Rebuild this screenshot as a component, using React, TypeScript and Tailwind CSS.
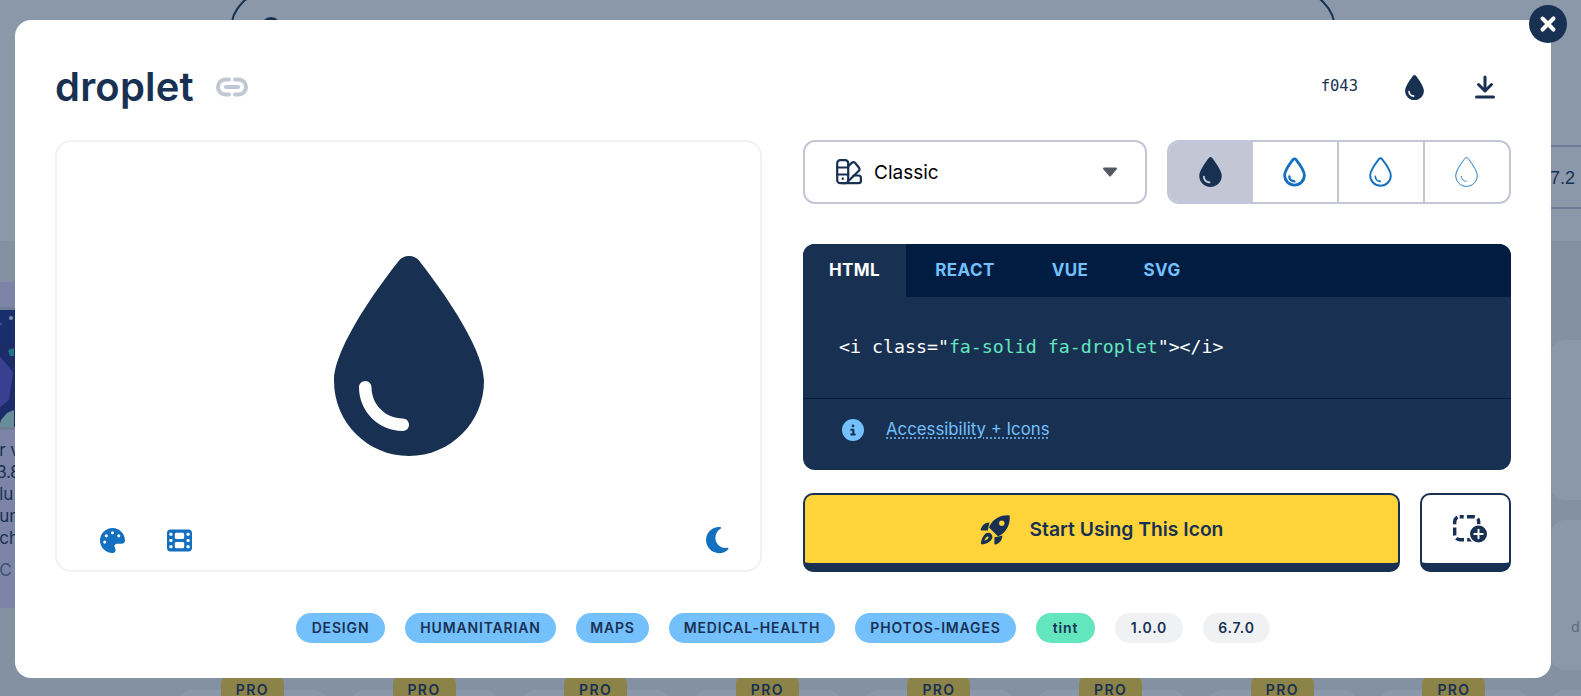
import {
  FaCircleInfo,
  FaDroplet,
  FaFilm,
  FaPalette,
  FaXmark,
} from "react-icons/fa6";

const FONT = "font-['Inter','Lato',sans-serif]";

const tags = [
  { label: "DESIGN", className: "w-[89px] bg-[#74c0fc]" },
  { label: "HUMANITARIAN", className: "w-[151px] bg-[#74c0fc]" },
  { label: "MAPS", className: "w-[73px] bg-[#74c0fc]" },
  { label: "MEDICAL-HEALTH", className: "w-[166px] bg-[#74c0fc]" },
  { label: "PHOTOS-IMAGES", className: "w-[161px] bg-[#74c0fc]" },
  { label: "tint", className: "w-[59px] bg-[#63e6be]" },
  { label: "1.0.0", className: "w-[68px] bg-[#f0f1f3]" },
  { label: "6.7.0", className: "w-[67px] bg-[#f0f1f3]" },
];

const DROP =
  "M192 512C86 512 0 426 0 320C0 228.8 130.2 57.7 166.6 11.7C172.6 4.2 181.5 0 191.1 0l1.8 0c9.6 0 18.5 4.2 24.5 11.7C253.8 57.7 384 228.8 384 320c0 106-86 192-192 192z";

function DropletOutline({ weight }: { weight: number }) {
  const s = (384 - weight) / 384;
  return (
    <svg viewBox="0 0 384 512" className="mr-[2px] h-[30px] w-[23px]" fill="none" stroke="#146fbe">
      <g transform={`translate(192 256) scale(${s}) translate(-192 -256)`}>
        <path d={DROP} strokeWidth={weight / s} />
      </g>
      <path
        d="M104 330c0 48 38 86 86 86"
        strokeWidth={weight * 0.85}
        strokeLinecap="round"
      />
    </svg>
  );
}

function LinkSimple() {
  return (
    <svg viewBox="0 0 34 20" className="ml-[21px] h-[20px] w-[34px]" fill="none" stroke="#c3c6d4" strokeWidth="4" strokeLinecap="round">
      <path d="M14 2.5H10.5a7.5 7.5 0 0 0 0 15H14" />
      <path d="M20 2.5h3.5a7.5 7.5 0 0 1 0 15H20" />
      <path d="M11 10h12" />
    </svg>
  );
}

function DownloadIcon() {
  return (
    <svg viewBox="0 0 20 24" className="h-[24px] w-[20px]" fill="none" stroke="#183153" strokeWidth="3" strokeLinecap="round" strokeLinejoin="round">
      <path d="M10 2v13" />
      <path d="M3.5 9.5 10 16l6.5-6.5" />
      <path d="M1.5 22h17" />
    </svg>
  );
}

function Swatchbook() {
  return (
    <svg viewBox="0 0 26 26" className="h-[26px] w-[26px]" fill="none" stroke="#183153" strokeWidth="2.2" strokeLinecap="round" strokeLinejoin="round">
      <rect x="1.2" y="1.2" width="11" height="23" rx="3" />
      <path d="M1.2 8.5h11M1.2 15.5h11" />
      <circle cx="6.7" cy="19.8" r="1.2" fill="#183153" stroke="none" />
      <path d="M12.5 7 16 3.6q1.6-1.2 3 .2l4 5q1.2 1.6-.2 3L13 21.5" />
      <path d="M17.5 16.5h5q2.4 0 2.4 2.4v3q0 2.2-2.4 2.2H7" />
    </svg>
  );
}

function RocketLaunch() {
  return (
    <svg viewBox="0 0 30 30" className="h-[30px] w-[30px]" fill="#183153">
      <path
        fillRule="evenodd"
        d="M29.6.4C30.4 8 27.6 15 21.5 19.4c-1 .7-2.2 1.4-3.6 1.9L9 12.4c.5-1.4 1.1-2.6 1.9-3.6C15.2 2.6 22-.4 29.6.4ZM21.8 5.6a2.7 2.7 0 1 0 0 5.4 2.7 2.7 0 0 0 0-5.4Z"
      />
      <path d="M9.6 7.6C6.8 7.8 4 8.4 2.2 11.2L.7 14c-.3.8.2 1.5 1 1.5h6.2c.3-2.8.9-5.4 1.7-7.9Z" />
      <path d="M22.4 20.6c-.2 2.8-.8 5.5-3.6 7.4l-2.9 1.5c-.8.3-1.5-.2-1.5-1v-6.2c2.8-.4 5.5-.9 8-1.7Z" />
      <path
        fillRule="evenodd"
        d="M5.4 18.8c2-1.6 4.6-1.2 6 .4 1.5 1.6 1.4 4-.2 5.8-1.6 2-4.4 3.6-8.6 4.4-1 .2-1.8-.6-1.7-1.6.7-3.8 2.2-6.9 4.5-9Zm1.6 3c-1.1.6-2 2-2.6 3.8 1.8-.6 3.2-1.4 3.9-2.4.7-1.2-.2-2-1.3-1.4Z"
      />
    </svg>
  );
}

function DashedPlus() {
  return (
    <svg viewBox="0 0 35 28" className="ml-[10px] h-[28px] w-[35px]">
      <rect x="1.7" y="1.7" width="24" height="23" rx="5" fill="none" stroke="#183153" strokeWidth="3.4" strokeDasharray="8 3.2" strokeDashoffset="4" />
      <circle cx="25.5" cy="19" r="10" fill="#fff" />
      <circle cx="25.5" cy="19" r="8.5" fill="#183153" />
      <path d="M25.5 14.8v8.4M21.3 19h8.4" stroke="#fff" strokeWidth="2" strokeLinecap="round" />
    </svg>
  );
}

function Moon() {
  return (
    <svg viewBox="0 0 512 512" className="ml-auto h-[30px] w-[30px]" fill="currentColor">
      <path d="M223.5 32C100 32 0 132.3 0 256S100 480 223.5 480c60.6 0 115.5-24.2 155.8-63.4c5-4.9 6.3-12.5 3.1-18.7s-10.1-9.7-17-8.5c-9.8 1.7-19.8 2.6-30.1 2.6c-96.9 0-175.5-78.8-175.5-176c0-65.8 36-123.1 89.3-153.3c6.1-3.5 9.2-10.5 7.7-17.3s-7.3-11.9-14.3-12.5c-6.3-.5-12.6-.8-19-.8z" />
    </svg>
  );
}

function AdPicture() {
  return (
    <svg viewBox="0 0 60 117" className="h-[117px] w-[60px]">
      <rect width="60" height="117" fill="#20267f" />
      <rect y="0" width="60" height="34" fill="#1a2a86" />
      <circle cx="12" cy="8" r="2" fill="#e6ecff" />
      <circle cx="2" cy="14" r="0.8" fill="#aab6ff" />
      <path d="M0 45 14 62 10 90 0 98z" fill="#5a4fd0" />
      <path d="M9 40 15 38 15 46 11 46z" fill="#2bb6b8" />
      <path d="M2 110 8 103 15 100 15 117 0 117z" fill="#b8e8e0" />
    </svg>
  );
}

export default function App() {
  return (
    <div className={`relative h-[696px] overflow-hidden bg-white ${FONT} text-[#183153]`}>
      {/* page behind the modal */}
      <div className="flex h-[241px] overflow-hidden">
        <div className="relative ml-[230px] -mt-[10px] h-20 w-[1106px] rounded-[40px] border-2 border-[#183153]">
          <div className="ml-[29px] mt-[25px] h-5 w-5 rounded-full bg-[#183153]" />
        </div>
        <div className="ml-auto mt-[145px] flex h-[64px] w-[100px] items-center justify-end border-y-2 border-[#c3c6d4] pr-[6px] pt-[1px] font-['Liberation_Sans',sans-serif] text-lg">
          7.2
        </div>
      </div>
      <div className="h-[455px] bg-[#f0f1f3]">
        <div className="grid grid-cols-[repeat(10,151.67px)] grid-rows-[160px_150px_150px] gap-5 pl-[5.2px] pt-[99px]">
          <div className="row-span-3 -ml-[6px] -mt-[58px] h-[326px] w-[100px] self-start overflow-hidden bg-[#e0d8fb]">
            <div className="mt-[25px] border-y-[3px] border-[#c9c9d6]">
              <AdPicture />
            </div>
            <div className="mt-[9px] whitespace-nowrap text-[17px] leading-[22px] text-[#183153]">
              <p>r v</p>
              <p className="-ml-[3px] tracking-tight">3.8</p>
              <p>lu</p>
              <p>un</p>
              <p>ch</p>
              <p className="mt-[10px] text-[#6c7390]">C</p>
            </div>
          </div>
          {Array.from({ length: 27 }).map((_, i) => (
            <div key={i} className="relative rounded-2xl bg-white">
              {i === 17 && <p className="pl-[21px] pt-[97px] text-sm text-[#9ca1b1]">d</p>}
              {i >= 18 && (
                <span className="absolute -top-[14px] left-[44px] flex h-[28px] w-[63px] items-center justify-center rounded-lg bg-[#ffd43b] text-sm font-semibold tracking-widest">
                  PRO
                </span>
              )}
            </div>
          ))}
        </div>
      </div>

      {/* modal */}
      <div className="absolute inset-0 flex items-start bg-[#183153]/50">
        <div className="relative ml-[15px] mt-[20px] h-[658px] w-[1536px] rounded-2xl bg-white px-10 pt-10">
          <button className="absolute -right-4 -top-[15px] flex h-[38px] w-[38px] items-center justify-center rounded-full bg-[#183153] text-white">
            <FaXmark className="h-[22px] w-[22px] stroke-current stroke-[30]" />
          </button>

          <header className="mb-[26px] flex h-[54px] items-center">
            <h1 className="text-[40px] font-semibold leading-none tracking-[0.2px]">droplet</h1>
            <LinkSimple />
            <code className="ml-auto font-['DejaVu_Sans_Mono',monospace] text-[15.5px]">f043</code>
            <FaDroplet className="ml-[47px] h-[25px] w-[19px]" />
            <span className="ml-[51px] mr-[16px]">
              <DownloadIcon />
            </span>
          </header>

          <div className="flex h-[432px] gap-[41px]">
            <section className="flex w-[707px] flex-col items-center rounded-2xl border-2 border-[#f0f1f3] pt-[114px]">
              <FaDroplet className="h-[200px] w-[150px]" />
              <div className="mt-[69px] flex w-full items-center pl-[43px] pr-[24px] text-[#146fbe]">
                <FaPalette className="h-[25px] w-[25px]" />
                <FaFilm className="ml-[42px] h-[25px] w-[25px]" />
                <Moon />
              </div>
            </section>

            <section className="flex w-[708px] flex-col">
              <div className="flex h-[64px] gap-5">
                <button className="flex w-[344px] items-center rounded-xl border-2 border-[#c3c6d4] pl-[31px] pr-[27px] text-[19px] text-black">
                  <Swatchbook />
                  <span className="ml-[12px] pt-[2px]">Classic</span>
                  <svg viewBox="0 0 16 10" className="ml-auto h-[10px] w-[16px]">
                    <path d="M2 1.5h12L8 8.5z" fill="#545861" stroke="#545861" strokeWidth="2" strokeLinejoin="round" />
                  </svg>
                </button>
                <div className="flex flex-1 overflow-hidden rounded-xl border-2 border-[#c3c6d4]">
                  <div className="flex flex-1 items-center justify-center bg-[#c3c6d4]">
                    <FaDroplet className="mr-[2px] h-[30px] w-[23px]" />
                  </div>
                  <div className="flex flex-1 items-center justify-center border-r-2 border-[#c3c6d4]">
                    <DropletOutline weight={48} />
                  </div>
                  <div className="flex flex-1 items-center justify-center border-r-2 border-[#c3c6d4]">
                    <DropletOutline weight={32} />
                  </div>
                  <div className="flex flex-1 items-center justify-center">
                    <DropletOutline weight={16} />
                  </div>
                </div>
              </div>

              <div className="mt-[40px] h-[226px] overflow-hidden rounded-xl bg-[#183153]">
                <div className="flex h-[53px] items-center bg-[#001c40] pt-[1px] text-[17px] font-bold tracking-wide text-[#74c0fc]">
                  <span className="-mt-[1px] flex h-[53px] w-[103px] items-center justify-center bg-[#183153] pt-[1px] text-white">HTML</span>
                  <span className="flex w-[118px] justify-center">REACT</span>
                  <span className="flex w-[92px] justify-center">VUE</span>
                  <span className="flex w-[92px] justify-center">SVG</span>
                </div>
                <div className="flex h-[102px] items-center border-b border-[#001c40] pb-[1px] pl-[36px] font-['DejaVu_Sans_Mono',monospace] text-[18.25px] text-white">
                  <span>
                    &lt;i class=&quot;<span className="text-[#63e6be]">fa-solid fa-droplet</span>&quot;&gt;&lt;/i&gt;
                  </span>
                </div>
                <div className="flex h-[62px] items-center pl-[39px] text-[#74c0fc]">
                  <FaCircleInfo className="h-[22px] w-[22px]" />
                  <a className="ml-[22px] text-[16.8px] underline decoration-dotted underline-offset-2">Accessibility + Icons</a>
                </div>
              </div>

              <div className="mt-[23px] flex h-[79px] gap-5">
                <button className="flex w-[597px] items-center justify-center gap-5 rounded-[10px] border-2 border-b-[9px] border-[#183153] bg-[#ffd43b] pt-[1px] text-[19.3px] font-semibold">
                  <RocketLaunch />
                  Start Using This Icon
                </button>
                <button className="flex flex-1 items-center justify-center rounded-[10px] border-2 border-b-[9px] border-[#183153] bg-white">
                  <DashedPlus />
                </button>
              </div>
            </section>
          </div>

          <div className="mt-[41px] flex justify-center gap-5">
            {tags.map((tag) => (
              <span
                key={tag.label}
                className={`flex h-[30px] items-center justify-center rounded-full text-sm font-semibold tracking-[0.06em] ${tag.className}`}
              >
                {tag.label}
              </span>
            ))}
          </div>
        </div>
      </div>
    </div>
  );
}
